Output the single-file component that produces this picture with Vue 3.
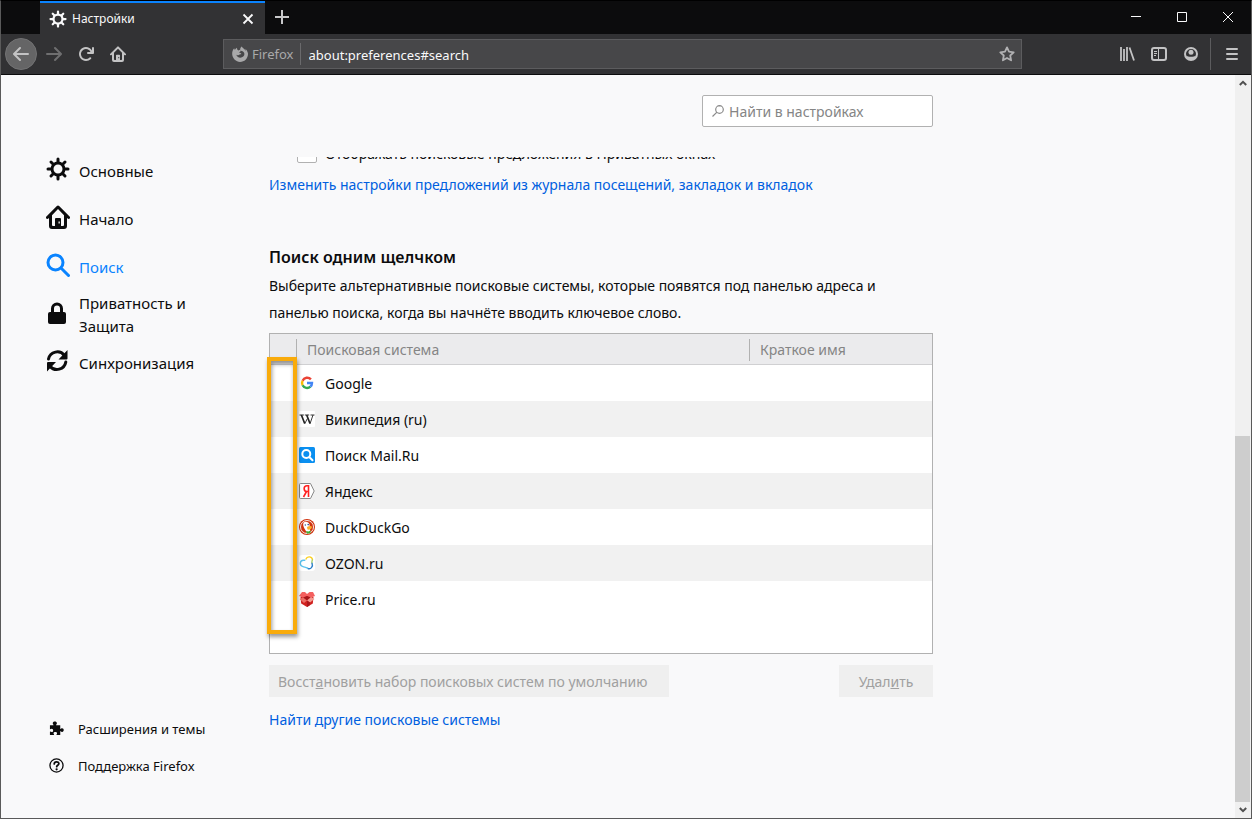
<template>
  <div class="browser">

    <!-- Title bar -->
    <header class="titlebar">
      <div class="tab">
        <svg class="tab-icon" viewBox="0 0 24 24" aria-hidden="true">
          <circle cx="12" cy="12" r="6" fill="none" stroke="currentColor" stroke-width="3" />
          <path :d="gearTeeth" stroke="currentColor" stroke-width="3" stroke-linecap="round" />
        </svg>
        <span class="tab-title">Настройки</span>
        <button class="tab-close" aria-label="Закрыть вкладку">
          <svg viewBox="0 0 12 12" width="12" height="12"><path d="M1.500 1.500l9 9M10.500 1.500l-9 9" stroke="currentColor" stroke-width="1.800" /></svg>
        </button>
      </div>
      <button class="new-tab" aria-label="Новая вкладка">
        <svg viewBox="0 0 14 14" width="14" height="14"><path d="M7 0v14M0 7h14" stroke="currentColor" stroke-width="2" /></svg>
      </button>
      <div class="window-buttons">
        <button aria-label="Свернуть">
          <svg viewBox="0 0 10 10" width="10" height="10"><path d="M0 4.500h10" stroke="currentColor" /></svg>
        </button>
        <button aria-label="Развернуть">
          <svg viewBox="0 0 10 10" width="10" height="10"><path d="M.5.5h9v9h-9z" fill="none" stroke="currentColor" /></svg>
        </button>
        <button aria-label="Закрыть">
          <svg viewBox="0 0 10 10" width="10" height="10"><path d="M0 0l10 10M10 0L0 10" stroke="currentColor" /></svg>
        </button>
      </div>
    </header>

    <!-- Toolbar -->
    <div class="toolbar">
      <button class="tool back" aria-label="Назад">
        <svg viewBox="0 0 16 16"><path d="M15 7H3.414l4.293-4.293a1 1 0 0 0-1.414-1.414l-6 6a1 1 0 0 0 0 1.414l6 6a1 1 0 0 0 1.414-1.414L3.414 9H15a1 1 0 0 0 0-2z" /></svg>
      </button>
      <button class="tool forward" aria-label="Вперёд" disabled>
        <svg viewBox="0 0 16 16"><path d="M1 7h11.586L8.293 2.707a1 1 0 0 1 1.414-1.414l6 6a1 1 0 0 1 0 1.414l-6 6a1 1 0 0 1-1.414-1.414L12.586 9H1a1 1 0 0 1 0-2z" /></svg>
      </button>
      <button class="tool" aria-label="Обновить">
        <svg viewBox="0 0 16 16"><path d="M15 1a1 1 0 0 0-1 1v2.418A6.995 6.995 0 1 0 8 15a6.954 6.954 0 0 0 4.950-2.050 1 1 0 0 0-1.414-1.414A5.019 5.019 0 1 1 12.549 6H10a1 1 0 0 0 0 2h5a1 1 0 0 0 1-1V2a1 1 0 0 0-1-1z" /></svg>
      </button>
      <button class="tool" aria-label="Домой">
        <svg viewBox="0 0 24 24"><path :d="housePath" fill-rule="evenodd" /></svg>
      </button>

      <div class="urlbar">
        <span class="identity">
          <svg viewBox="0 0 16 16" width="16" height="16" aria-hidden="true">
            <path d="M15.600 6.200c-.4-1.300-1.300-2.700-2.400-3.500.5.9.7 1.800.8 2.400C12.700 3 11 2.300 9.600.400c-.9.700-1.500 2-1.400 3.300-.7.100-1.200.4-1.700.8C5.300 4 5 3 5 1.700 3.900 2.300 3.300 3.100 3 3.800c-.6-.3-.8-1-.8-1.600C.7 3.800 0 6 .2 8.600.6 12.700 4 15.900 8 15.900c4.400 0 8-3.600 8-8 0-.6-.1-1.200-.4-1.700zM8.400 11.700c-2.200 0-3.600-1.200-4-2.900.7.500 1.700.5 2.400.1.800-.4 1.200-.8 1.900-.6.5 0 .8-.5.4-.9-.5-.6-1.300-.8-2-.6.100-.5.7-.8 1.400-1.200.1-.6-.2-.9-.6-.9 2.600-.3 4.500 1.200 4.500 3.400 0 2-1.700 3.600-4 3.600z" fill-rule="evenodd" />
          </svg>
          Firefox
        </span>
        <input class="url" v-model="url" aria-label="Адрес" />
        <button class="star" aria-label="Добавить в закладки">
          <svg viewBox="0 0 16 16"><path d="M8 1.400l2 4.300 4.700.6-3.500 3.200.9 4.800L8 12l-4.100 2.300.9-4.800L1.300 6.300 6 5.700z" fill="none" stroke="currentColor" stroke-width="1.800" stroke-linejoin="round" /></svg>
        </button>
      </div>

      <div class="tools-right">
        <button class="tool" aria-label="Библиотека">
          <svg viewBox="0 0 16 16"><path d="M2 1v14M5 3v12M8 1v14M10.500 1.500l4.500 13" fill="none" stroke="currentColor" stroke-width="1.800" /></svg>
        </button>
        <button class="tool" aria-label="Боковые панели">
          <svg viewBox="0 0 16 16"><rect x="1" y="2" width="14" height="12" rx="2" fill="none" stroke="currentColor" stroke-width="2" /><path d="M7.500 2v12M3 5.500h3M3 7.500h3M3 9.500h2" fill="none" stroke="currentColor" /></svg>
        </button>
        <button class="tool" aria-label="Учётная запись">
          <svg viewBox="0 0 16 16"><circle cx="8" cy="8" r="6" fill="none" stroke="currentColor" stroke-width="2" /><circle cx="8" cy="6.200" r="2.500" /><path d="M3 9.500c2 1.800 8 1.800 10 0l-1 3c-2 2-6 2-8 0z" /></svg>
        </button>
        <button class="tool menu" aria-label="Меню">
          <svg viewBox="0 0 16 16"><path d="M3 3h10M3 8h10M3 13h10" stroke="currentColor" stroke-width="2" stroke-linecap="round" /></svg>
        </button>
      </div>
    </div>

    <!-- Page -->
    <div class="page">
      <aside class="sidebar">
        <nav class="categories">
          <a v-for="c in categories" :key="c.id" :href="'#' + c.id" :class="{ active: c.id === current }" @click.prevent="current = c.id">
            <svg viewBox="0 0 24 24" aria-hidden="true">
              <template v-if="c.id === 'general'">
                <circle cx="12" cy="12" r="6" fill="none" stroke="currentColor" stroke-width="3" />
                <path :d="gearTeeth" stroke="currentColor" stroke-width="3" stroke-linecap="round" />
              </template>
              <path v-else-if="c.id === 'home'" :d="housePath" fill-rule="evenodd" />
              <path v-else-if="c.id === 'search'" d="M9.500 2a7.500 7.500 0 1 0 0 15 7.500 7.500 0 0 0 0-15zM15 15l7.500 7.500" fill="none" stroke="currentColor" stroke-width="3" stroke-linecap="round" />
              <template v-else-if="c.id === 'privacy'">
                <rect x="2" y="11" width="18" height="12" rx="2" />
                <path d="M6.500 12V7.500a4.500 4.500 0 0 1 9 0V12" fill="none" stroke="currentColor" stroke-width="3" />
              </template>
              <template v-else>
                <path d="M2.500 10A9 9 0 0 1 18.500 6.500M19.800 13A9 9 0 0 1 4 17.200" fill="none" stroke="currentColor" stroke-width="3" stroke-linecap="round" />
                <path d="M21.500 1v8.500a1 1 0 0 1-1 1H12.500zM1 22.500V14a1 1 0 0 1 1-1h8z" />
              </template>
            </svg>
            <span>{{ c.label }}</span>
          </a>
        </nav>
        <div class="extra">
          <a href="#addons">
            <svg viewBox="0 0 16 16" aria-hidden="true"><path d="M1 4.500h3.800C5.200 4 4 3.500 4 2.400 4 1.200 5 .6 6.200.6s2.200.6 2.200 1.800c0 1.100-1.200 1.600-.8 2.100H12v4c.6.400 1-.7 2-.7 1.100 0 1.700.9 1.700 1.900s-.6 1.900-1.700 1.900c-1 0-1.400-1.100-2-.7V15H8c-.4-.6.6-1 .6-1.900 0-1-.9-1.500-1.900-1.500s-1.900.5-1.900 1.500c0 .9 1 1.300.6 1.900H1v-3.600c.4-.5 1 .4 1.900.4 1 0 1.500-.8 1.500-1.800S3.900 8.200 2.900 8.200c-.9 0-1.500.9-1.900.5z" /></svg>
            Расширения и темы
          </a>
          <a href="#support">
            <svg viewBox="0 0 16 16" aria-hidden="true"><circle cx="8" cy="8" r="7" fill="none" stroke="currentColor" stroke-width="1.400" /><path d="M5.600 6.300c0-3 4.900-2.900 4.900-.2 0 1.500-2.300 1.600-2.300 3.200" fill="none" stroke="currentColor" stroke-width="1.900" stroke-linecap="round" /><circle cx="8.100" cy="12" r="1.200" /></svg>
            Поддержка Firefox
          </a>
        </div>
      </aside>

      <main class="content">
        <div class="search-row">
          <label class="search-box">
            <svg viewBox="0 0 12 12" width="12" height="12" aria-hidden="true"><path d="M7.500.7a3.800 3.800 0 1 0 0 7.600 3.800 3.800 0 0 0 0-7.600zM4.700 7.300L.5 11.500" fill="none" stroke="currentColor" stroke-width="1.200" /></svg>
            <input v-model="query" type="text" placeholder="Найти в настройках" aria-label="Найти в настройках" />
          </label>
        </div>

        <div class="cut-row">
          <input id="private" type="checkbox" />
          <label for="private">Отображать поисковые предложения в Приватных окнах</label>
        </div>
        <a class="link" href="#privacy">Изменить настройки предложений из журнала посещений, закладок и вкладок</a>

        <h2>Поиск одним щелчком</h2>
        <p class="about">Выберите альтернативные поисковые системы, которые появятся под панелью адреса и панелью поиска, когда вы начнёте вводить ключевое слово.</p>

        <div class="engines">
          <table>
            <thead>
              <tr>
                <th class="col-check"></th>
                <th class="col-name"><span>Поисковая система</span></th>
                <th><span>Краткое имя</span></th>
              </tr>
            </thead>
            <tbody>
              <tr v-for="e in engines" :key="e.id">
                <td></td>
                <td>
                  <div class="engine">
                    <svg viewBox="0 0 16 16" width="16" height="16" aria-hidden="true">
                      <template v-if="e.id === 'google'">
                        <g fill="none" stroke-width="2.400">
                          <path d="M11.900 4.400A5 5 0 0 0 3.600 5.700" stroke="#ea4335" />
                          <path d="M3.600 5.700a5 5 0 0 0 0 4.600" stroke="#fbbc05" />
                          <path d="M3.600 10.300a5 5 0 0 0 7.800 1.400" stroke="#34a853" />
                          <path d="M11.400 11.700A5 5 0 0 0 13 8H8" stroke="#4285f4" />
                        </g>
                      </template>
                      <template v-else-if="e.id === 'wiki'">
                        <rect width="16" height="16" rx="1" fill="#fff" />
                        <path d="M.5 4h4.400M5.800 4h4.400M11.500 4h4" stroke="#222" stroke-width=".9" />
                        <path d="M2.400 4L5.700 12.500M7.700 4L11 12.500" stroke="#222" stroke-width="1.700" />
                        <path d="M5.700 12.800L8.400 7.500M11 12.800l3-8.800" stroke="#222" stroke-width=".9" />
                      </template>
                      <template v-else-if="e.id === 'mail'">
                        <rect width="16" height="16" rx="1.500" fill="#0a8ff0" />
                        <path d="M7.300 3a4 4 0 1 0 0 8 4 4 0 0 0 0-8zM10.500 10.200l3 3" fill="none" stroke="#fff" stroke-width="2" stroke-linecap="round" />
                      </template>
                      <template v-else-if="e.id === 'yandex'">
                        <path d="M1.500.5h10l3.700 7.500-3.700 7.500h-10a1 1 0 0 1-1-1v-13a1 1 0 0 1 1-1z" fill="#fff" stroke="#888" />
                        <path d="M9.500 14V2.800H8C4.200 2.800 4.200 8.500 8 8.500h1.500M7.500 8.500L4.500 14" fill="none" stroke="#f22" stroke-width="1.600" />
                      </template>
                      <template v-else-if="e.id === 'ddg'">
                        <circle cx="8" cy="8" r="8" fill="#d0330f" />
                        <circle cx="8" cy="8" r="6.500" fill="none" stroke="#fff" stroke-width=".9" />
                        <path d="M4.500 3.800C6 2 10 2.800 10.500 5.500l.8 7.500-3.300 1.200C7 11 3 7.500 4.500 3.800z" fill="#fff" />
                        <circle cx="6.300" cy="6" r=".7" fill="#2d4f8e" />
                        <circle cx="9.200" cy="5.600" r=".8" fill="#2d4f8e" />
                        <path d="M8 8c1.800-1.200 4-1.200 5-.3-.3 2.300-2.500 3.400-4.500 2.800z" fill="#fcb02d" />
                        <path d="M7 12l2.500.5 2-1V14l-3.500.7z" fill="#3cae35" />
                      </template>
                      <template v-else-if="e.id === 'ozon'">
                        <rect width="16" height="16" rx="3" fill="#fff" />
                        <g fill="none" stroke-width="1.400" stroke-linecap="round">
                          <path d="M7 4c1-3 6-2.800 6.500.7" stroke="#fbd024" />
                          <path d="M13.300 5c-.3 1.700-.8 2-.3 3" stroke="#a5cf6c" />
                          <path d="M13 8.300c1.500 3.300-1.500 6.500-4.300 5" stroke="#2a7fc9" />
                          <path d="M8.500 13.200C7 12 5.500 12.300 4 11.700c-4-1.300-3.500-7.300 1.700-6.400" stroke="#5cc3ee" />
                        </g>
                      </template>
                      <template v-else>
                        <path d="M1.500 6L8 4l6.500 2-.7 6.500L8 16l-5.800-3.500z" fill="#d0211f" />
                        <path d="M3 1h3l2 2 2.500-2H14l2 4-5 2-3-2-3 2-5-2z" fill="#f4605f" />
                        <path d="M4 6.500L8 5l4 1.500L8 9.500z" fill="#a5161a" />
                        <path d="M.5 8L4 6.500 8 9.500 5 12z" fill="#ec6e66" />
                        <path d="M15.500 8L12 6 8 9.500l3 2z" fill="#f59a90" />
                        <path d="M8 9.500l3 2-.5 3L8 16z" fill="#aa171b" />
                      </template>
                    </svg>
                    {{ e.name }}
                  </div>
                </td>
                <td></td>
              </tr>
            </tbody>
          </table>
          <div class="highlight"></div>
        </div>

        <div class="actions">
          <button class="restore" disabled>Восст<u>а</u>новить набор поисковых систем по умолчанию</button>
          <button class="remove" disabled>Удал<u>и</u>ть</button>
        </div>
        <a class="link" href="#more">Найти другие поисковые системы</a>
      </main>

      <div class="scrollbar">
        <button aria-label="Вверх"><svg viewBox="0 0 8 6" width="8" height="6"><path d="M.8 5L4 1.800 7.200 5" fill="none" stroke="currentColor" stroke-width="2" /></svg></button>
        <div class="track"><div class="thumb"></div></div>
        <button aria-label="Вниз"><svg viewBox="0 0 8 6" width="8" height="6"><path d="M.8 1L4 4.200 7.200 1" fill="none" stroke="currentColor" stroke-width="2" /></svg></button>
      </div>
    </div>

  </div>
</template>

<script setup>
import { ref } from 'vue'

const url = ref('about:preferences#search')
const query = ref('')
const current = ref('search')

// shared by the tab and the sidebar
const gearTeeth = 'M12 5V2M12 22v-3M5 12H2M22 12h-3M7 7L5 5M19 19l-2-2M7 17l-2 2M19 5l-2 2'
const housePath = 'M12 .5a1.500 1.500 0 0 1 1.100.5l10.500 10.500a1.400 1.400 0 0 1-2 2L21 13v8a3 3 0 0 1-3 3H6a3 3 0 0 1-3-3v-8l-.6.5a1.400 1.400 0 0 1-2-2L10.900 1A1.500 1.500 0 0 1 12 .5zM12 4l-6 6.200V20a1 1 0 0 0 1 1h2v-7a1 1 0 0 1 1-1h4a1 1 0 0 1 1 1v7h2a1 1 0 0 0 1-1v-9.800zM12.500 16.500v2h1.300v-2z'

const categories = [
  { id: 'general', label: 'Основные' },
  { id: 'home', label: 'Начало' },
  { id: 'search', label: 'Поиск' },
  { id: 'privacy', label: 'Приватность и Защита' },
  { id: 'sync', label: 'Синхронизация' }
]

const engines = [
  { id: 'google', name: 'Google' },
  { id: 'wiki', name: 'Википедия (ru)' },
  { id: 'mail', name: 'Поиск Mail.Ru' },
  { id: 'yandex', name: 'Яндекс' },
  { id: 'ddg', name: 'DuckDuckGo' },
  { id: 'ozon', name: 'OZON.ru' },
  { id: 'price', name: 'Price.ru' }
]
</script>

<style>
body {
  background: #f9f9fa;
}
</style>

<style scoped>
.browser {
  box-sizing: border-box;
  display: flex;
  flex-direction: column;
  min-height: 100vh;
  border: 1px solid #5a5a5a;
  border-top-color: #000;
  font-family: "Noto Sans", "Open Sans", sans-serif;
  font-size: 14px;
  color: #0c0c0d;
}

button,
input {
  box-sizing: border-box;
  margin: 0;
  padding: 0;
  border: none;
  background: none;
  font: inherit;
  color: inherit;
}

button {
  display: flex;
  align-items: center;
  justify-content: center;
}

a {
  text-decoration: none;
}

svg {
  flex: none;
  fill: currentColor;
}

/* Title bar */
.titlebar {
  display: flex;
  height: 33px;
  padding-left: 39px;
  background: #0c0c0d;
  color: #f9f9fa;
}

.tab {
  box-sizing: border-box;
  display: flex;
  align-items: center;
  width: 225px;
  padding: 0 9px;
  border-top: 2px solid #0a84ff;
  background: #323234;
  font-size: 12px;
}

.tab-icon {
  width: 18px;
  height: 18px;
}

.tab-title {
  flex: 1;
  margin-left: 5px;
}

.tab-close {
  width: 16px;
  height: 16px;
}

.new-tab {
  width: 34px;
  padding-bottom: 2px;
  color: #c8c8c9;
}

.window-buttons {
  display: flex;
  margin-left: auto;
}

.window-buttons button {
  width: 46px;
  padding-bottom: 2px;
}

/* Toolbar */
.toolbar {
  display: flex;
  align-items: center;
  height: 40px;
  padding-left: 4px;
  border-bottom: 1px solid #0c0c0d;
  background: #323234;
  color: #c3c3c4;
}

.tool {
  width: 32px;
  height: 32px;
}

.tool svg,
.star svg {
  width: 16px;
  height: 16px;
}

.back {
  margin-right: 1px;
  border: 1px solid #737374;
  border-radius: 50%;
  background: #656566;
}

.forward {
  color: #6f6f70;
}

.urlbar {
  box-sizing: border-box;
  display: flex;
  align-items: center;
  flex: 1;
  height: 30px;
  margin-left: 89px;
  border: 1px solid #5c5c5e;
  background: #474749;
}

.identity {
  display: flex;
  align-items: center;
  gap: 4px;
  height: 22px;
  padding: 0 6px 0 8px;
  border-right: 1px solid #6a6a6c;
  font-size: 13px;
  color: #a9a9aa;
}

.url {
  flex: 1;
  min-width: 0;
  padding: 2px 0 0 8px;
  font-size: 13px;
  color: #f9f9fa;
}

.star {
  width: 28px;
  height: 28px;
  color: #b1b1b3;
}

.tools-right {
  display: flex;
  margin-left: 89px;
}

.menu {
  box-sizing: content-box;
  width: 38px;
  margin-left: 3px;
  padding-left: 2px;
  border-left: 1px solid #5c5c5e;
}

/* Page */
.page {
  flex: 1;
  display: flex;
  background: #f9f9fa;
}

.sidebar {
  box-sizing: border-box;
  display: flex;
  flex-direction: column;
  justify-content: space-between;
  width: 268px;
  padding: 72px 60px 34px 45px;
}

.categories a {
  display: flex;
  align-items: center;
  gap: 9px;
  height: 48px;
  font-size: 15px;
  line-height: 23px;
  color: inherit;
}

.categories svg {
  width: 24px;
  height: 24px;
  margin-bottom: 4px;
}

.categories a.active {
  color: #0a84ff;
}

.extra a {
  display: flex;
  align-items: center;
  gap: 14px;
  height: 37px;
  padding-left: 3px;
  font-size: 13px;
  color: inherit;
}

.extra svg {
  width: 15px;
  height: 15px;
}

.content {
  flex: 1;
  max-width: 664px;
  padding-top: 20px;
}

.search-row {
  display: flex;
  justify-content: flex-end;
  height: 62px;
}

.search-box {
  box-sizing: border-box;
  display: flex;
  align-items: center;
  gap: 5px;
  width: 231px;
  height: 32px;
  padding: 0 9px;
  border: 1px solid #b1b1b1;
  border-radius: 2px;
  background: #fff;
  color: #8a8a8a;
}

.search-box input {
  flex: 1;
  min-width: 0;
  outline: none;
  color: #0c0c0d;
}

.search-box input::placeholder {
  color: #858585;
  opacity: 1;
}

/* Row scrolled under the search box */
.cut-row {
  display: flex;
  align-items: flex-end;
  gap: 8px;
  height: 6px;
  padding-left: 28px;
  overflow: hidden;
}

.cut-row input {
  width: 20px;
  height: 20px;
  border: 1px solid #b1b1b1;
  border-radius: 2px;
  background: #fff;
  appearance: none;
}

.cut-row label {
  line-height: 18px;
}

.link {
  display: block;
  line-height: 22px;
  color: #0060df;
}

.cut-row + .link {
  margin-top: 11px;
}

h2 {
  margin: 49px 0 0;
  font-size: 16px;
  font-weight: 600;
  line-height: 24px;
}

.about {
  margin: 3px 0 7px;
  line-height: 27px;
}

/* Engines */
.engines {
  box-sizing: border-box;
  position: relative;
  min-height: 321px;
  border: 1px solid #b1b1b1;
  background: #fff;
}

table {
  width: 100%;
  table-layout: fixed;
  border-collapse: collapse;
}

th {
  height: 28px;
  padding: 2px 0 0;
  border-bottom: 1px solid #d0d0d2;
  background: #ebebed;
  font-weight: normal;
  text-align: left;
  color: #858585;
}

th span {
  display: block;
  padding-left: 10px;
  border-left: 1px solid #b1b1b1;
  line-height: 22px;
}

.col-check {
  width: 26px;
}

.col-name {
  width: 453px;
}

td {
  height: 36px;
  padding: 0;
}

tbody tr:nth-child(even) {
  background: #f1f1f1;
}

.engine {
  display: flex;
  align-items: center;
  gap: 10px;
  padding-left: 3px;
}

.highlight {
  box-sizing: border-box;
  position: absolute;
  top: 23px;
  left: -3px;
  width: 30px;
  height: 277px;
  border: 4px solid #f9ab0b;
  box-shadow: 1px 3px 4px rgba(0, 0, 0, 0.4), inset 1px 3px 4px rgba(0, 0, 0, 0.4);
}

.actions {
  display: flex;
  justify-content: space-between;
  margin: 11px 0 12px;
}

.actions button {
  height: 32px;
  background: #efefef;
  color: #a0a0a0;
}

.actions .restore {
  justify-content: flex-start;
  width: 400px;
  padding-left: 9px;
}

.actions .remove {
  width: 94px;
}

/* Scrollbar */
.scrollbar {
  display: flex;
  flex-direction: column;
  width: 16px;
  margin-left: auto;
  background: #f0f0f0;
  color: #505050;
}

.scrollbar button {
  height: 16px;
}

.track {
  flex: 1;
  display: flex;
  align-items: flex-end;
}

.thumb {
  width: 15px;
  height: 51.5%;
  background: #cdcdcd;
}
</style>
